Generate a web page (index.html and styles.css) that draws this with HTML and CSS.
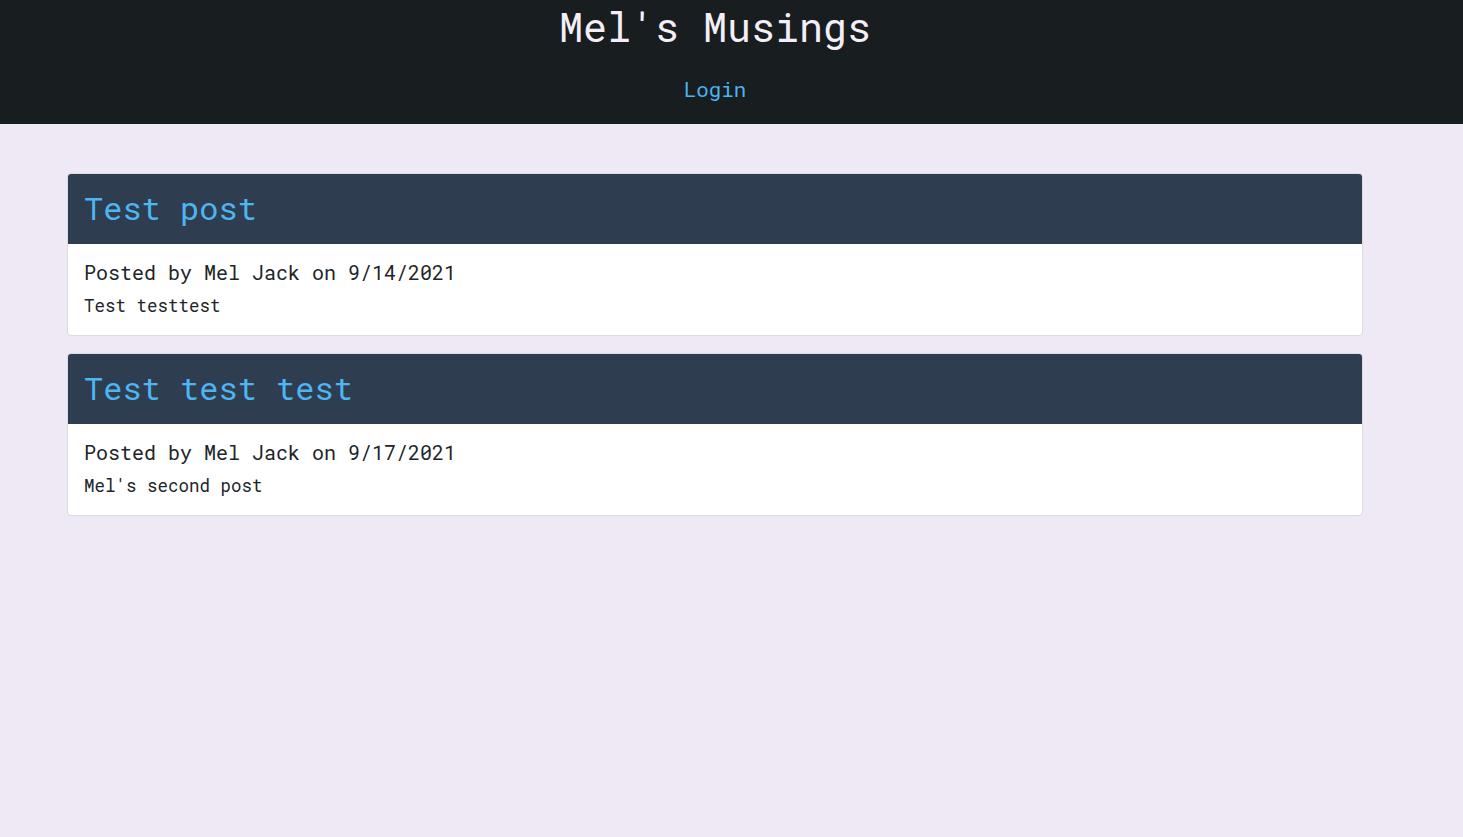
FILE: index.html
```html
<!DOCTYPE html>
<html>
<head>
<meta charset="utf-8">
<link rel="stylesheet" href="styles.css">
</head>
<body>
<header class="site-header">
  <div class="header-inner">
    <h1 class="site-title">Mel's Musings</h1>
    <nav class="site-nav"><a class="nav-link" href="#">Login</a></nav>
  </div>
</header>
<main class="posts">
  <article class="card">
    <div class="card-header"><h2 class="card-title">Test post</h2></div>
    <div class="card-body">
      <p class="meta">Posted by Mel Jack on 9/14/2021</p>
      <p class="content">Test testtest</p>
    </div>
  </article>
  <article class="card">
    <div class="card-header"><h2 class="card-title">Test test test</h2></div>
    <div class="card-body">
      <p class="meta">Posted by Mel Jack on 9/17/2021</p>
      <p class="content">Mel's second post</p>
    </div>
  </article>
</main>
</body>
</html>
```
FILE: styles.css
```css
* { box-sizing: border-box; }
html, body { margin: 0; padding: 0; }
body {
  background: #efe9f5;
  font-family: "Roboto Mono", "DejaVu Sans Mono", "Liberation Mono", monospace;
  color: #212529;
  min-height: 837px;
}
.site-header {
  background: #181d1f;
  height: 124px;
  padding-top: 3px;
}
.header-inner {
  width: 1430px;
  text-align: center;
}
.site-title {
  margin: 0;
  font-size: 40px;
  line-height: 48px;
  font-weight: 400;
  color: #f3eef7;
}
.site-nav {
  margin-top: 23px;
}
.nav-link {
  color: #4db3f2;
  text-decoration: none;
  font-size: 20.8px;
  line-height: 30px;
}
.posts {
  width: 1430px;
  padding: 49px 67px 0;
  display: flex;
  flex-direction: column;
  gap: 17px;
}
.card {
  width: 1296px;
  background: #fff;
  border: 1px solid #dcdcdc;
  border-radius: 4px;
  overflow: hidden;
}
.card-header {
  background: #2e3d50;
  height: 71px;
  padding: 0 16px 2px;
  display: flex;
  align-items: center;
  margin: -1px -1px 0;
}
.card-title {
  margin: 0;
  font-size: 32px;
  line-height: 38px;
  font-weight: 400;
  color: #4db6f2;
  padding-left: 1px;
}
.card-body {
  padding: 13px 16px 14px;
}
.meta {
  margin: 0;
  font-size: 20px;
  line-height: 30px;
}
.content {
  margin: 4px 0 0;
  font-size: 17.5px;
  line-height: 30px;
}
```
